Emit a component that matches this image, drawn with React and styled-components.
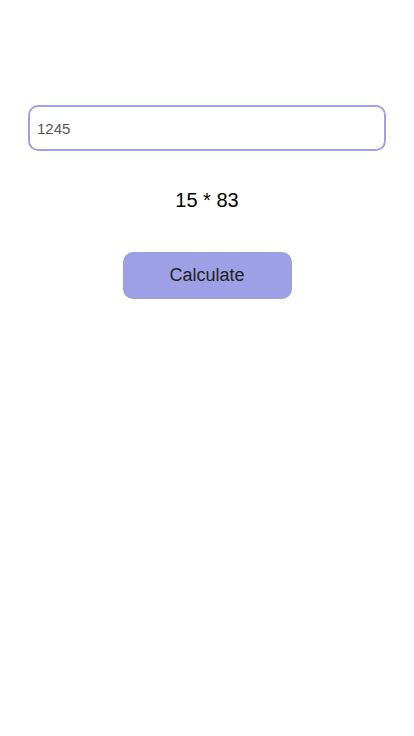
import styled, { createGlobalStyle } from 'styled-components';

const GlobalStyle = createGlobalStyle`
  body {
    margin: 0;
    background: #ffffff;
    font-family: "Liberation Sans", Arial, sans-serif;
  }
`;

const App = () => {
  return (
    <>
      <GlobalStyle />
      <StyledPage>
        <StyledInput defaultValue='1245' />
        <StyledResult>15 * 83</StyledResult>
        <StyledButton>Calculate</StyledButton>
      </StyledPage>
    </>
  );
};

//styled-components
const StyledPage = styled.div`
  display: flex;
  flex-direction: column;
  align-items: center;
  padding: 105px 28px 0;
`;

const StyledInput = styled.input`
  box-sizing: border-box;
  width: 100%;
  height: 46px;
  border: 2px solid #9fa0e6;
  border-radius: 10px;
  padding: 0 7px;
  font-family: "Liberation Sans", Arial, sans-serif;
  font-size: 15px;
  color: #555555;
  outline: none;
`;

const StyledResult = styled.div`
  margin-top: 37px;
  font-size: 20px;
  line-height: 24px;
  color: #000000;
`;

const StyledButton = styled.button`
  margin-top: 40px;
  width: 169px;
  height: 47px;
  border: none;
  border-radius: 10px;
  background: #9ea0e5;
  font-family: "Liberation Sans", Arial, sans-serif;
  font-size: 18px;
  color: #222222;
  cursor: pointer;
`;

export default App;
